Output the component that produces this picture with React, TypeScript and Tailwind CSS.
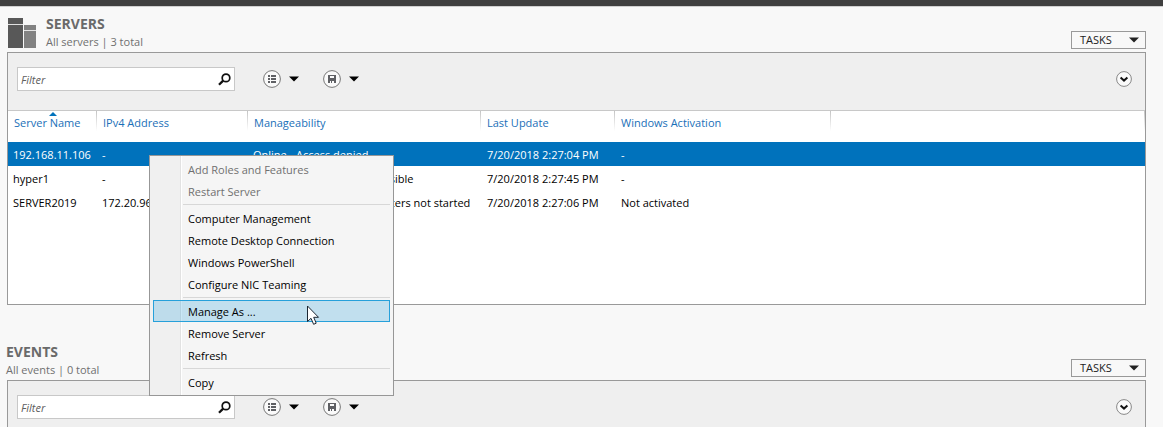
import React from "react";

type Server = {
  name: string;
  ip: string;
  manageability: string;
  updated: string;
  activation: string;
};

const servers: Server[] = [
  { name: "192.168.11.106", ip: "-", manageability: "Online - Access denied", updated: "7/20/2018 2:27:04 PM", activation: "-" },
  { name: "hyper1", ip: "-", manageability: "Target computer not accessible", updated: "7/20/2018 2:27:45 PM", activation: "-" },
  { name: "SERVER2019", ip: "172.20.96.1", manageability: "Online - Performance counters not started", updated: "7/20/2018 2:27:06 PM", activation: "Not activated" },
];

const menuGroups: { label: string; disabled?: boolean; active?: boolean }[][] = [
  [
    { label: "Add Roles and Features", disabled: true },
    { label: "Restart Server", disabled: true },
  ],
  [
    { label: "Computer Management" },
    { label: "Remote Desktop Connection" },
    { label: "Windows PowerShell" },
    { label: "Configure NIC Teaming" },
  ],
  [{ label: "Manage As ...", active: true }, { label: "Remove Server" }, { label: "Refresh" }],
  [{ label: "Copy" }],
];

function Caret({ className }: { className: string }) {
  return (
    <svg className={className} width="10" height="6" viewBox="0 0 10 6" aria-hidden="true">
      <path d="M0 0.5H10L5 5.5Z" fill="currentColor" />
    </svg>
  );
}

function ServersIcon() {
  return (
    <svg className="mb-1 ml-px mr-[10px] shrink-0" width="28" height="30" viewBox="0 0 28 30" aria-hidden="true">
      <path d="M0 0H15V30H0Z" fill="#585858" />
      <path d="M0 6H15V7H0Z" fill="#e0e0e0" />
      <path d="M16 7H28V30H16Z" fill="#828282" />
      <path d="M16 12H28V13H16Z" fill="#e4e4e4" />
    </svg>
  );
}

function ListIcon() {
  return (
    <svg width="18" height="18" viewBox="0 0 18 18" aria-hidden="true">
      <circle cx="9" cy="9" r="8.4" fill="#fafafa" stroke="#777" />
      <path d="M5 5h2v2H5zM8 5h5v2H8zM5 8h2v2H5zM8 8h5v2H8zM5 11h2v2H5zM8 11h5v2H8z" fill="#5f6064" />
    </svg>
  );
}

function SaveIcon() {
  return (
    <svg width="18" height="18" viewBox="0 0 18 18" aria-hidden="true">
      <circle cx="9" cy="9" r="8.4" fill="#fafafa" stroke="#777" />
      <path d="M5 5h8v8H5z" fill="#5f6064" />
      <path d="M7 6h4v2H7zM7 11h1v2H7zM9 11h2v2H9z" fill="#fafafa" />
    </svg>
  );
}

function SectionHeader({ title, summary, icon, className }: { title: string; summary: string; icon?: React.ReactNode; className: string }) {
  return (
    <header className={className}>
      {icon}
      <div className="grow pb-px">
        <h2 className="text-[14px] leading-[18px] font-bold text-[#6a6a6a]">{title}</h2>
        <p className="leading-[18px] text-[#707070]">{summary}</p>
      </div>
      <button type="button" className="mb-[3px] flex h-[18px] w-[75px] items-center justify-between border border-[#999] bg-[#f8f8f8] pr-[6px] pl-2 text-[#222]">
        TASKS
        <Caret className="text-[#222]" />
      </button>
    </header>
  );
}

function Toolbar() {
  return (
    <div className="flex h-[58px] items-start border-b border-[#c8c8c8] bg-[#efefef] pt-[14px] pr-[13px] pl-[9px]">
      <div className="flex h-6 w-[218px] items-center border border-[#c8c8c8] bg-white">
        <input type="text" aria-label="Filter" placeholder="Filter" className="h-full min-w-0 grow pl-[3px] italic outline-none placeholder:text-[#606060] placeholder:opacity-100" />
        <button type="button" aria-label="Search" className="mr-[3px]">
          <svg width="13" height="13" viewBox="0 0 13 13" fill="none" stroke="#111" aria-hidden="true">
            <circle cx="8" cy="4.9" r="3.8" strokeWidth="1.7" />
            <path d="M5.2 7.6L1 11.8" strokeWidth="2.3" />
          </svg>
        </button>
      </div>
      <div className="ml-7 flex h-6 items-center">
        <button type="button" aria-label="Saved filters" className="flex items-center gap-2">
          <ListIcon />
          <Caret className="text-black" />
        </button>
        <button type="button" aria-label="Save filter" className="ml-6 flex items-center gap-2">
          <SaveIcon />
          <Caret className="text-black" />
        </button>
      </div>
      <button type="button" aria-label="Expand" className="mt-1 ml-auto">
        <svg width="16" height="16" viewBox="0 0 16 16" aria-hidden="true">
          <circle cx="8" cy="8" r="7.4" fill="#fafafa" stroke="#888" />
          <path d="M4.6 6.6L8 9.6L11.4 6.6" fill="none" stroke="#111" strokeWidth="2" />
        </svg>
      </button>
    </div>
  );
}

const columns = ["Server Name", "IPv4 Address", "Manageability", "Last Update", "Windows Activation", ""];

function ServerTable() {
  return (
    <table className="w-full table-fixed border-collapse text-left whitespace-nowrap">
      <colgroup>
        <col className="w-[89px]" />
        <col className="w-[151px]" />
        <col className="w-[233px]" />
        <col className="w-[134px]" />
        <col className="w-[216px]" />
        <col />
      </colgroup>
      <thead>
        <tr className="h-[31px] align-top text-[#1a6fb8]">
          {columns.map((c, i) => (
            <th
              key={i}
              className="relative bg-[linear-gradient(to_bottom,#c4c4c4,#ffffff)] bg-[length:1px_20px] bg-right-top bg-no-repeat p-0 pt-[3px] pl-[6px] leading-[18px] font-normal"
            >
              {i === 0 && (
                <svg className="absolute top-px left-[41px]" width="8" height="4" viewBox="0 0 8 4" aria-hidden="true">
                  <path d="M0 4L4 0L8 4Z" fill="#0072bc" />
                </svg>
              )}
              {c}
            </th>
          ))}
        </tr>
      </thead>
      <tbody>
        {servers.map((s, i) => (
          <tr key={s.name} className={i === 0 ? "h-6 bg-[#0072bc] text-white" : "h-6 text-black"}>
            <td className="p-0 pt-[2px] pl-[5px]">{s.name}</td>
            <td className="p-0 pt-[2px] pl-[5px]">{s.ip}</td>
            <td className="p-0 pt-[2px] pl-[5px]">{s.manageability}</td>
            <td className="p-0 pt-[2px] pl-[6px]">{s.updated}</td>
            <td className="p-0 pt-[2px] pl-[6px]">{s.activation}</td>
            <td className="p-0" />
          </tr>
        ))}
      </tbody>
    </table>
  );
}

function ContextMenu() {
  return (
    <div
      role="menu"
      className="absolute top-[155px] left-[149px] w-[245px] border border-[#979797] bg-[#f5f5f5] bg-[linear-gradient(to_right,#f0f0f0_30px,#e2e2e2_30px,#e2e2e2_31px,#ffffff_31px,#ffffff_32px,#f5f5f5_32px)] px-[3px] py-[2px]"
    >
      {menuGroups.map((group, g) => (
        <div key={g} role="group">
          {g > 0 && <div role="separator" className="my-[2px] ml-[30px] h-px bg-[#d7d7d7]" />}
          {group.map((item) => (
            <button
              key={item.label}
              type="button"
              role="menuitem"
              disabled={item.disabled}
              className={
                item.active
                  ? "flex h-[22px] w-full items-center border border-[#26a0da] bg-[#26a0da]/25 pt-[2px] pl-[34px] text-black"
                  : "flex h-[22px] w-full items-center border border-transparent pt-[2px] pl-[34px] text-black disabled:text-[#707070]"
              }
            >
              {item.label}
            </button>
          ))}
        </div>
      ))}
    </div>
  );
}

export default function App() {
  return (
    <div className="relative h-screen overflow-hidden bg-[#f8f8f8] font-['Open_Sans','Noto_Sans',sans-serif] text-[11px]">
      <div className="h-[7px] border-b border-[#d0d0d0] bg-[#404040]" />
      <main className="pr-[17px] pl-[7px]">
        <section>
          <SectionHeader title="SERVERS" summary="All servers | 3 total" icon={<ServersIcon />} className="flex h-[45px] items-end" />
          <div className="min-h-[253px] border border-[#999] bg-white">
            <Toolbar />
            <ServerTable />
          </div>
        </section>
        <section>
          <SectionHeader title="EVENTS" summary="All events | 0 total" className="-ml-px flex h-[75px] items-end" />
          <div className="min-h-[253px] border border-[#999] bg-white">
            <Toolbar />
          </div>
        </section>
      </main>
      <ContextMenu />
      <svg className="pointer-events-none absolute top-[305px] left-[307px]" width="13" height="21" viewBox="0 0 13 21" aria-hidden="true">
        <path d="M0.5 1V16.5L4 13.3L6.6 19.3L9.2 18.2L6.7 12.3H11.5Z" fill="#fff" stroke="#1c2733" />
      </svg>
    </div>
  );
}
